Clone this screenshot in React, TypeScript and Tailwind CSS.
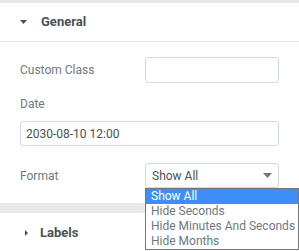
export default function App() {
  const options = ["Show All", "Hide Seconds", "Hide Minutes And Seconds", "Hide Months"];

  return (
    <div className="relative w-[299px] h-[251px] overflow-hidden bg-white font-['Roboto',sans-serif]">
      <div className="h-[3px] bg-[#e6e9ec]" />
      <div className="flex h-[39px] items-center border-b border-[#e6e9ec] pl-[20px]">
        <svg width="7" height="4" viewBox="0 0 7 4" className="mr-[14px]">
          <path d="M0 0h7L3.5 4z" fill="#495157" />
        </svg>
        <span className="text-[13px] font-bold text-[#495157]">General</span>
      </div>

      <div className="px-[20px] pt-[15px] pb-[15px]">
        <div className="flex items-center justify-between">
          <span className="text-[12px] text-[#6d7882]">Custom Class</span>
          <div className="h-[26px] w-[134px] rounded-[3px] border border-[#d5dadf]" />
        </div>

        <div className="mt-[12px] text-[12px] text-[#6d7882]">Date</div>
        <div className="mt-[8px] flex h-[25px] items-center rounded-[3px] border border-[#d5dadf] px-[5px] text-[12px] text-[#495157]">
          2030-08-10 12:00
        </div>

        <div className="mt-[17px] flex items-center justify-between">
          <span className="text-[12px] text-[#6d7882]">Format</span>
          <div className="flex h-[25px] w-[134px] items-center justify-between rounded-[3px] border border-[#d5dadf] pl-[6px] pr-[6px] text-[12px] text-[#495157]">
            <span>Show All</span>
            <svg width="9" height="5" viewBox="0 0 9 5">
              <path d="M0 0h9L4.5 5z" fill="#6d7882" />
            </svg>
          </div>
        </div>
      </div>

      <div className="h-[10px] bg-[#e6e9ec]" />
      <div className="flex h-[39px] items-center pl-[25px]">
        <svg width="3" height="6" viewBox="0 0 3 6" className="mr-[12px]">
          <path d="M0 0v6l3-3z" fill="#495157" />
        </svg>
        <span className="text-[13px] font-bold text-[#495157]">Labels</span>
      </div>

      <div className="absolute left-[145px] top-[188px] w-[154px] border border-[#767676] bg-white">
        {options.map((o, i) => (
          <div
            key={o}
            className={
              i === 0
                ? "h-[15px] whitespace-nowrap pl-[5px] text-[12px] leading-[15px] text-white bg-[#3d8ef8]"
                : "h-[15px] whitespace-nowrap pl-[5px] text-[12px] leading-[15px] text-[#6d7882]"
            }
          >
            {o}
          </div>
        ))}
      </div>
    </div>
  );
}
